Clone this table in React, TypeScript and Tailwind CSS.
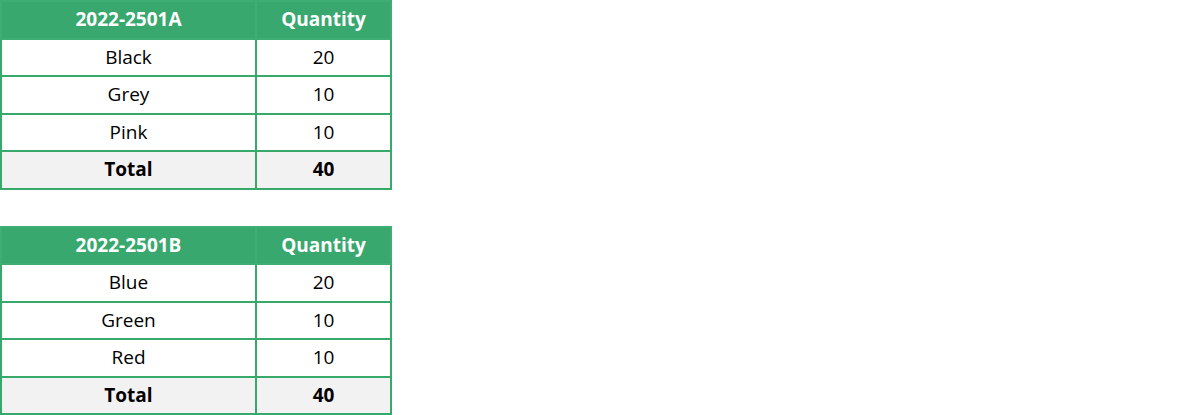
const tables = [
  {
    code: '2022-2501A',
    rows: [
      { color: 'Black', qty: 20 },
      { color: 'Grey', qty: 10 },
      { color: 'Pink', qty: 10 },
    ],
  },
  {
    code: '2022-2501B',
    rows: [
      { color: 'Blue', qty: 20 },
      { color: 'Green', qty: 10 },
      { color: 'Red', qty: 10 },
    ],
  },
]

function QtyTable({ code, rows }: { code: string; rows: { color: string; qty: number }[] }) {
  const total = rows.reduce((sum, r) => sum + r.qty, 0)
  return (
    <table className="w-[392px] border-collapse text-[19px] leading-none text-black">
      <colgroup>
        <col className="w-[255px]" />
        <col />
      </colgroup>
      <thead>
        <tr className="h-[37.5px] bg-[#38a86e] text-white">
          <th className="border-2 border-[#3fae72] font-bold">{code}</th>
          <th className="border-2 border-[#3fae72] font-bold">Quantity</th>
        </tr>
      </thead>
      <tbody>
        {rows.map(r => (
          <tr key={r.color} className="h-[37.5px] bg-white">
            <td className="border-2 border-[#37a96b] text-center">{r.color}</td>
            <td className="border-2 border-[#37a96b] text-center">{r.qty}</td>
          </tr>
        ))}
        <tr className="h-[37.5px] bg-[#f2f2f2] font-bold">
          <td className="border-2 border-[#37a96b] text-center">Total</td>
          <td className="border-2 border-[#37a96b] text-center">{total}</td>
        </tr>
      </tbody>
    </table>
  )
}

export default function App() {
  return (
    <div className="flex flex-col gap-[36px] bg-white" style={{ fontFamily: '"Open Sans", Lato, sans-serif' }}>
      {tables.map(t => (
        <QtyTable key={t.code} code={t.code} rows={t.rows} />
      ))}
    </div>
  )
}
